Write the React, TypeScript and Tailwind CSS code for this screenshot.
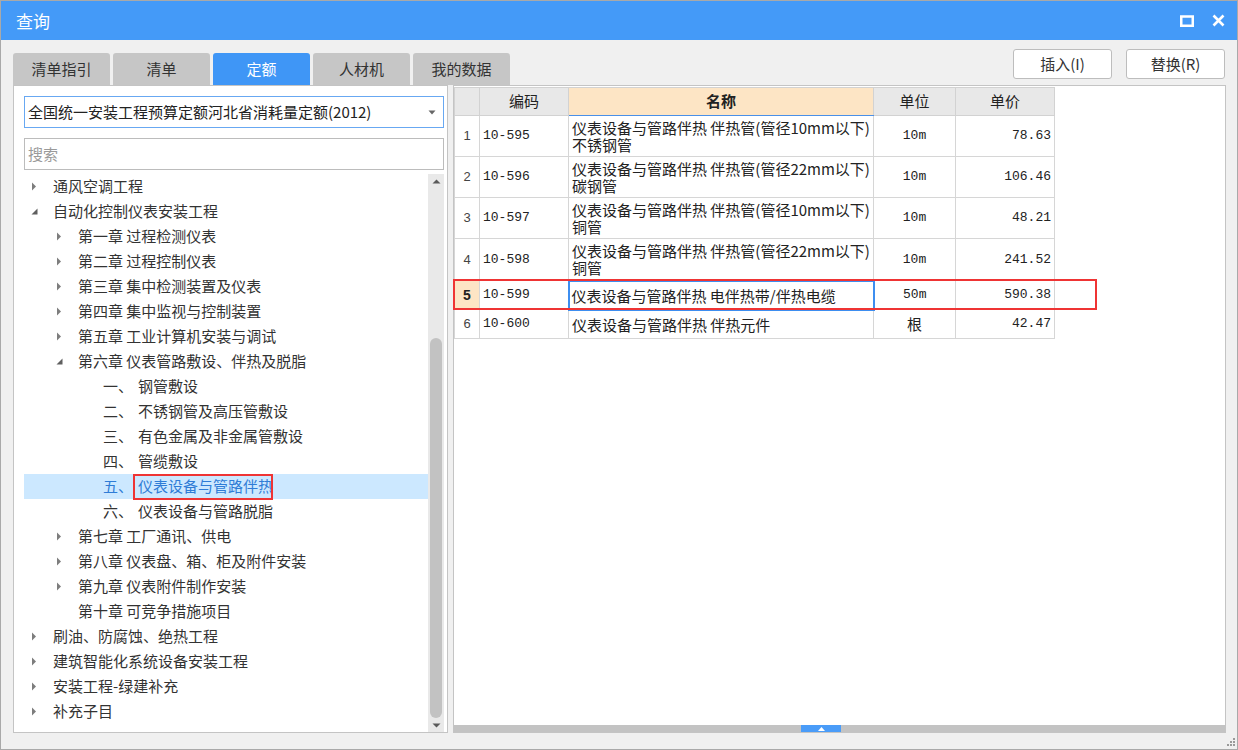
import React from "react"

type TreeRow = {
  level: number
  text: string
  arrow?: "right" | "down"
  prefix?: string
  selected?: boolean
}

const tree: TreeRow[] = [
  { level: 0, text: "通风空调工程", arrow: "right" },
  { level: 0, text: "自动化控制仪表安装工程", arrow: "down" },
  { level: 1, text: "第一章 过程检测仪表", arrow: "right" },
  { level: 1, text: "第二章 过程控制仪表", arrow: "right" },
  { level: 1, text: "第三章 集中检测装置及仪表", arrow: "right" },
  { level: 1, text: "第四章 集中监视与控制装置", arrow: "right" },
  { level: 1, text: "第五章 工业计算机安装与调试", arrow: "right" },
  { level: 1, text: "第六章 仪表管路敷设、伴热及脱脂", arrow: "down" },
  { level: 2, prefix: "一、", text: "钢管敷设" },
  { level: 2, prefix: "二、", text: "不锈钢管及高压管敷设" },
  { level: 2, prefix: "三、", text: "有色金属及非金属管敷设" },
  { level: 2, prefix: "四、", text: "管缆敷设" },
  { level: 2, prefix: "五、", text: "仪表设备与管路伴热", selected: true },
  { level: 2, prefix: "六、", text: "仪表设备与管路脱脂" },
  { level: 1, text: "第七章 工厂通讯、供电", arrow: "right" },
  { level: 1, text: "第八章 仪表盘、箱、柜及附件安装", arrow: "right" },
  { level: 1, text: "第九章 仪表附件制作安装", arrow: "right" },
  { level: 1, text: "第十章 可竞争措施项目" },
  { level: 0, text: "刷油、防腐蚀、绝热工程", arrow: "right" },
  { level: 0, text: "建筑智能化系统设备安装工程", arrow: "right" },
  { level: 0, text: "安装工程-绿建补充", arrow: "right" },
  { level: 0, text: "补充子目", arrow: "right" },
]

type Item = { code: string; name: string[]; unit: string; price: string; h: string }

const items: Item[] = [
  { code: "10-595", name: ["仪表设备与管路伴热 伴热管(管径10mm以下)", "不锈钢管"], unit: "10m", price: "78.63", h: "h-[41px]" },
  { code: "10-596", name: ["仪表设备与管路伴热 伴热管(管径22mm以下)", "碳钢管"], unit: "10m", price: "106.46", h: "h-[41px]" },
  { code: "10-597", name: ["仪表设备与管路伴热 伴热管(管径10mm以下)", "铜管"], unit: "10m", price: "48.21", h: "h-[41px]" },
  { code: "10-598", name: ["仪表设备与管路伴热 伴热管(管径22mm以下)", "铜管"], unit: "10m", price: "241.52", h: "h-[42px]" },
  { code: "10-599", name: ["仪表设备与管路伴热 电伴热带/伴热电缆"], unit: "50m", price: "590.38", h: "h-[29px]" },
  { code: "10-600", name: ["仪表设备与管路伴热 伴热元件"], unit: "根", price: "42.47", h: "h-[29px]" },
]

const tabs = ["清单指引", "清单", "定额", "人材机", "我的数据"]

function Arrow({ dir }: { dir?: "right" | "down" }) {
  if (dir === "right")
    return (
      <svg width="6" height="9" viewBox="0 0 6 9">
        <path d="M1 0.5 L5 4.5 L1 8.5 Z" fill="#7d7d7d" />
      </svg>
    )
  if (dir === "down")
    return (
      <svg width="7" height="7" viewBox="0 0 7 7">
        <path d="M6.5 0.5 L6.5 6.5 L0.5 6.5 Z" fill="#5f5f5f" />
      </svg>
    )
  return null
}

export default function App() {
  return (
    <div className="w-[1238px] h-[750px] bg-[#f0f0f0] border border-[#a9a9a9] flex flex-col font-['Noto_Sans_CJK_SC',sans-serif] text-[#333] overflow-hidden">
      {/* title bar */}
      <div className="h-[39px] bg-[#449af8] flex items-center justify-between pl-[15px] pr-[12px] text-white">
        <span className="text-[17px]">查询</span>
        <div className="flex items-center gap-[18px]">
          <svg width="14" height="12" viewBox="0 0 14 12">
            <rect x="1.25" y="1.5" width="11.5" height="9.25" fill="none" stroke="white" strokeWidth="2.5" />
          </svg>
          <svg width="13" height="13" viewBox="0 0 13 13">
            <path d="M1.5 1.5 L11.5 11.5 M11.5 1.5 L1.5 11.5" stroke="white" strokeWidth="2.6" />
          </svg>
        </div>
      </div>

      {/* tabs + buttons */}
      <div className="h-[45px] flex justify-between pl-[12px] pr-[12px]">
        <div className="flex items-end gap-[3px]">
          {tabs.map((t) => (
            <div
              key={t}
              className={
                t === "定额"
                  ? "w-[97px] h-[32px] rounded-t-[3px] bg-[#3f96f6] text-white text-[15px] flex items-center justify-center"
                  : "w-[97px] h-[32px] rounded-t-[3px] bg-[#c6c6c6] text-[#333] text-[15px] flex items-center justify-center"
              }
            >
              {t}
            </div>
          ))}
        </div>
        <div className="flex gap-[14px] mt-[9px]">
          <button className="w-[99px] h-[30px] bg-white border border-[#bdbdbd] rounded-[3px] text-[15px] text-[#333]">插入(I)</button>
          <button className="w-[99px] h-[30px] bg-white border border-[#bdbdbd] rounded-[3px] text-[15px] text-[#333]">替换(R)</button>
        </div>
      </div>

      {/* main */}
      <div className="h-[648px] flex gap-[5px] pl-[12px] pr-[11px]">
        {/* left panel */}
        <div className="w-[435px] bg-white border border-[#c4c4c4] flex flex-col pt-[10px] pl-[10px] pr-[3px]">
          <div className="h-[32px] border border-[#68a8f2] flex items-center justify-between pl-[3px] pr-[7px] text-[15px] text-[#222]">
            <span>全国统一安装工程预算定额河北省消耗量定额(2012)</span>
            <svg width="8" height="5" viewBox="0 0 8 5">
              <path d="M0.5 0.5 L7.5 0.5 L4 4.5 Z" fill="#666" />
            </svg>
          </div>
          <div className="mt-[10px] h-[32px] border border-[#bcbcbc] flex items-center pl-[3px] text-[15px] text-[#9a9a9a]">搜索</div>
          <div className="mt-[4px] flex-1 flex min-h-0">
            <div className="flex-1 overflow-hidden">
              {tree.map((r, i) => (
                <div
                  key={i}
                  className={
                    r.selected
                      ? "relative h-[25px] flex items-center text-[15px] bg-[#cce8ff] text-[#2f7cd6]"
                      : "relative h-[25px] flex items-center text-[15px] text-[#333]"
                  }
                >
                  <div style={{ width: r.level * 25 }} className="shrink-0" />
                  <div className="w-[20px] shrink-0 flex justify-center items-center">
                    <Arrow dir={r.arrow} />
                  </div>
                  <div className="ml-[9px] flex whitespace-nowrap">
                    {r.prefix && <span className="w-[35px]">{r.prefix}</span>}
                    <span>{r.text}</span>
                  </div>
                  {r.selected && (
                    <div className="absolute left-[109px] top-0 w-[140px] h-[26px] border-2 border-[#ef3434]" />
                  )}
                </div>
              ))}
            </div>
            <div className="w-[16px] bg-[#e9e9e9] flex flex-col items-center">
              <div className="h-[14px] flex items-center justify-center">
                <svg width="9" height="5" viewBox="0 0 9 5">
                  <path d="M0.5 4.5 L4.5 0.5 L8.5 4.5 Z" fill="#5a5a5a" />
                </svg>
              </div>
              <div className="h-[150px]" />
              <div className="w-[12px] h-[380px] rounded-full bg-[#c2c2c2]" />
              <div className="flex-1 flex items-center justify-center">
                <svg width="9" height="5" viewBox="0 0 9 5">
                  <path d="M0.5 0.5 L8.5 0.5 L4.5 4.5 Z" fill="#5a5a5a" />
                </svg>
              </div>
            </div>
          </div>
        </div>

        {/* right panel */}
        <div className="relative w-[773px] bg-white border border-[#c4c4c4] flex flex-col">
          <div className="flex-1 pt-px">
            <table className="table-fixed border-collapse w-[600px] text-[15px] text-[#222]">
              <colgroup>
                <col className="w-[25px]" />
                <col className="w-[89px]" />
                <col className="w-[305px]" />
                <col className="w-[82px]" />
                <col className="w-[99px]" />
              </colgroup>
              <thead>
                <tr className="h-[28px]">
                  <th className="bg-[#e8e8e8] border border-[#d2d2d2] font-normal" />
                  <th className="bg-[#e8e8e8] border border-[#d2d2d2] font-normal">编码</th>
                  <th className="bg-[#fde5c5] border border-[#d2d2d2] border-b-[#4a90e8] font-bold">名称</th>
                  <th className="bg-[#e8e8e8] border border-[#d2d2d2] font-normal">单位</th>
                  <th className="bg-[#e8e8e8] border border-[#d2d2d2] font-normal">单价</th>
                </tr>
              </thead>
              <tbody>
                {items.map((it, i) => {
                  const sel = i === 4
                  return (
                    <tr key={it.code} className={it.h}>
                      <td
                        className={
                          sel
                            ? "bg-[#fde5c5] border border-[#d6d6d6] text-center text-[14px] font-bold font-['Liberation_Sans',sans-serif]"
                            : "border border-[#d6d6d6] text-center text-[13px] text-[#444] font-['Liberation_Sans',sans-serif]"
                        }
                      >
                        {i + 1}
                      </td>
                      <td
                        className={
                          sel
                            ? "border border-[#d6d6d6] border-l-[#3d8ef0] pl-[3px] text-[13px] font-['Liberation_Mono',monospace]"
                            : "border border-[#d6d6d6] pl-[3px] text-[13px] font-['Liberation_Mono',monospace]"
                        }
                      >
                        {it.code}
                      </td>
                      <td
                        className={
                          sel
                            ? "border-2 border-[#3d8ef0] pl-[2px] leading-[17px] whitespace-nowrap"
                            : "border border-[#d6d6d6] pl-[3px] leading-[17px] whitespace-nowrap"
                        }
                      >
                        {it.name.map((l) => (
                          <div key={l}>{l}</div>
                        ))}
                      </td>
                      <td
                        className={
                          it.unit === "根"
                            ? "border border-[#d6d6d6] text-center text-[15px]"
                            : "border border-[#d6d6d6] text-center text-[13px] font-['Liberation_Mono',monospace]"
                        }
                      >
                        {it.unit}
                      </td>
                      <td className="border border-[#d6d6d6] text-right pr-[3px] text-[13px] font-['Liberation_Mono',monospace]">
                        {it.price}
                      </td>
                    </tr>
                  )
                })}
              </tbody>
            </table>
          </div>
          <div className="h-[7px] bg-[#c3c3c3] flex">
            <div className="ml-[347px] w-[40px] h-[7px] bg-[#4a9cf8] flex items-center justify-center">
              <svg width="7" height="4" viewBox="0 0 7 4">
                <path d="M0 4 L3.5 0 L7 4 Z" fill="white" />
              </svg>
            </div>
          </div>
          {/* highlight row 5 */}
          <div className="absolute left-[-1px] top-[193px] w-[644px] h-[31px] border-2 border-[#ef3434]" />
        </div>
      </div>

      {/* bottom strip */}
      <div className="flex-1 flex justify-end items-end pr-[1px] pb-[2px]">
        <svg width="10" height="10" viewBox="0 0 10 10">
          <rect x="7" y="1" width="2" height="2" fill="#9a9a9a" />
          <rect x="4" y="4" width="2" height="2" fill="#9a9a9a" />
          <rect x="7" y="4" width="2" height="2" fill="#9a9a9a" />
          <rect x="1" y="7" width="2" height="2" fill="#9a9a9a" />
          <rect x="4" y="7" width="2" height="2" fill="#9a9a9a" />
          <rect x="7" y="7" width="2" height="2" fill="#9a9a9a" />
        </svg>
      </div>
    </div>
  )
}
